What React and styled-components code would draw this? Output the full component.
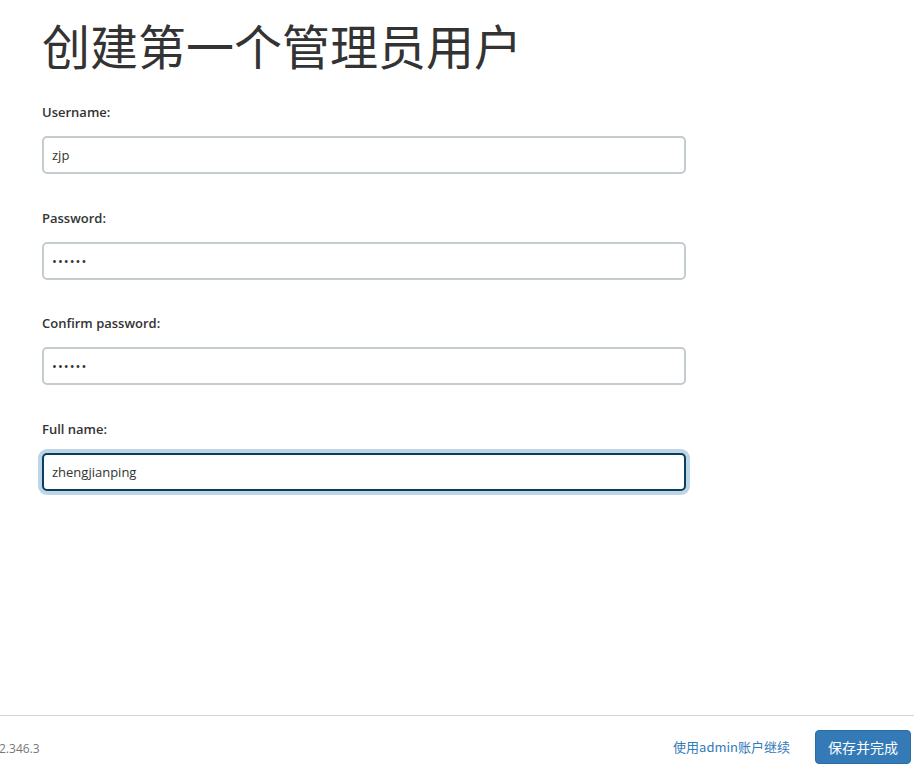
import styled, { createGlobalStyle } from "styled-components";

const GlobalStyle = createGlobalStyle`
  html, body {
    margin: 0;
    padding: 0;
    background: #fff;
  }
  body {
    font-family: "Open Sans", "Noto Sans", "Noto Sans CJK SC", sans-serif;
    color: #333;
  }
  * {
    box-sizing: border-box;
  }
`;

const Page = styled.div`
  display: flex;
  flex-direction: column;
  height: 100vh;
  overflow: hidden;
`;

const Content = styled.main`
  flex: 1;
  padding: 0 0 0 42px;
`;

const Title = styled.h1`
  margin: 13px 0 28px;
  font-family: "Noto Sans CJK SC", "Noto Sans", sans-serif;
  font-weight: 400;
  font-size: 48px;
  line-height: 62px;
  color: #333;
`;

const Form = styled.form`
  width: 644px;
  display: flex;
  flex-direction: column;
  gap: 34.7px;
`;

const Field = styled.div`
  display: flex;
  flex-direction: column;
  gap: 15px;
`;

const Label = styled.label`
  font-size: 13px;
  font-weight: 600;
  line-height: 18px;
  color: #333;
`;

const Input = styled.input`
  width: 100%;
  height: 38px;
  padding: 0 8px;
  border: 2px solid ${(p) => (p.$focused ? "#0b3d60" : "#c4cccf")};
  border-radius: 5px;
  box-shadow: ${(p) => (p.$focused ? "0 0 0 4px #bdd6e6" : "none")};
  font-family: "Open Sans", "Noto Sans", sans-serif;
  font-size: 13px;
  color: #333;
  background: #fff;
  outline: none;
  letter-spacing: ${(p) => (p.type === "password" ? "1px" : "0")};
`;

const Footer = styled.footer`
  height: 49px;
  border-top: 1px solid #d3d3d3;
  display: flex;
  align-items: center;
  justify-content: space-between;
  padding: 0 3px 0 0;
`;

const Version = styled.span`
  font-size: 12px;
  color: #777;
  margin-left: -1px;
  margin-top: 16px;
`;

const Actions = styled.div`
  display: flex;
  align-items: center;
  gap: 25px;
  margin-top: 13px;
`;

const Link = styled.a`
  font-family: "Noto Sans CJK SC", "Open Sans", sans-serif;
  font-size: 13px;
  color: #337ab7;
  text-decoration: none;
  cursor: pointer;
`;

const Button = styled.button`
  height: 34px;
  padding: 0 12px;
  border: 1px solid #2e6da4;
  border-radius: 4px;
  background: #337ab7;
  color: #fff;
  font-family: "Noto Sans CJK SC", "Open Sans", sans-serif;
  font-size: 14px;
  cursor: pointer;
`;

const fields = [
  { id: "username", label: "Username:", type: "text", value: "zjp" },
  { id: "password1", label: "Password:", type: "password", value: "zjpzjp" },
  { id: "password2", label: "Confirm password:", type: "password", value: "zjpzjp" },
  { id: "fullname", label: "Full name:", type: "text", value: "zhengjianping", focused: true },
];

function App() {
  return (
    <Page>
      <GlobalStyle />
      <Content>
        <Title>创建第一个管理员用户</Title>
        <Form onSubmit={(e) => e.preventDefault()}>
          {fields.map((f) => (
            <Field key={f.id}>
              <Label htmlFor={f.id}>{f.label}</Label>
              <Input
                id={f.id}
                type={f.type}
                defaultValue={f.value}
                $focused={f.focused}
              />
            </Field>
          ))}
        </Form>
      </Content>
      <Footer>
        <Version>2.346.3</Version>
        <Actions>
          <Link>使用admin账户继续</Link>
          <Button type="button">保存并完成</Button>
        </Actions>
      </Footer>
    </Page>
  );
}

export default App;
